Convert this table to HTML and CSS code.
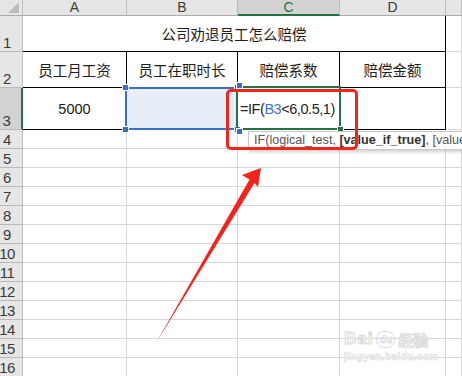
FILE: index.html
```html
<!DOCTYPE html>
<html lang="zh">
<head>
<meta charset="utf-8">
<title>公司劝退员工怎么赔偿</title>
<link rel="stylesheet" href="styles.css">
</head>
<body>
<div class="sheet">
  <div class="hd corner"><span class="tri"></span></div>
  <div class="hd col">A</div>
  <div class="hd col">B</div>
  <div class="hd col on">C</div>
  <div class="hd col">D</div>
  <div class="hd col"></div>

  <div class="hd row">1</div>
  <div class="c title bb br">公司劝退员工怎么赔偿</div>
  <div class="c"></div>

  <div class="hd row">2</div>
  <div class="c ctr bb br">员工月工资</div>
  <div class="c ctr bb br">员工在职时长</div>
  <div class="c ctr bb br">赔偿系数</div>
  <div class="c ctr bb br">赔偿金额</div>
  <div class="c"></div>

  <div class="hd row on">3</div>
  <div class="c ctr num bb br">5000</div>
  <div class="c ref bb br"></div>
  <div class="c formula bb br">=IF(<span class="refname">B3</span>&lt;6,0.5,1)</div>
  <div class="c bb br"></div>
  <div class="c"></div>

  <div class="hd row">4</div><div class="c"></div><div class="c"></div><div class="c"></div><div class="c"></div><div class="c"></div>
  <div class="hd row">5</div><div class="c"></div><div class="c"></div><div class="c"></div><div class="c"></div><div class="c"></div>
  <div class="hd row">6</div><div class="c"></div><div class="c"></div><div class="c"></div><div class="c"></div><div class="c"></div>
  <div class="hd row">7</div><div class="c"></div><div class="c"></div><div class="c"></div><div class="c"></div><div class="c"></div>
  <div class="hd row">8</div><div class="c"></div><div class="c"></div><div class="c"></div><div class="c"></div><div class="c"></div>
  <div class="hd row">9</div><div class="c"></div><div class="c"></div><div class="c"></div><div class="c"></div><div class="c"></div>
  <div class="hd row">10</div><div class="c"></div><div class="c"></div><div class="c"></div><div class="c"></div><div class="c"></div>
  <div class="hd row">11</div><div class="c"></div><div class="c"></div><div class="c"></div><div class="c"></div><div class="c"></div>
  <div class="hd row">12</div><div class="c"></div><div class="c"></div><div class="c"></div><div class="c"></div><div class="c"></div>
  <div class="hd row">13</div><div class="c"></div><div class="c"></div><div class="c"></div><div class="c"></div><div class="c"></div>
  <div class="hd row">14</div><div class="c"></div><div class="c"></div><div class="c"></div><div class="c"></div><div class="c"></div>
  <div class="hd row">15</div><div class="c"></div><div class="c"></div><div class="c"></div><div class="c"></div><div class="c"></div>
  <div class="hd row">16</div><div class="c"></div><div class="c"></div><div class="c"></div><div class="c"></div><div class="c"></div>

  <!-- overlays -->
  <div class="refbox">
    <span class="h tl"></span><span class="h tr"></span><span class="h bl"></span><span class="h br2"></span>
  </div>
  <div class="active"><span class="fill"></span></div>
  <div class="refhandles">
    <span class="h tr"></span><span class="h br2"></span>
  </div>
  <div class="tip">IF(logical_test, <b>[value_if_true]</b>, [value_if_false])</div>
  <div class="callout"></div>
  <svg class="arrow" width="462" height="376" viewBox="0 0 462 376">
    <polygon points="261,168 242,175 249.5,179.5 156,343 254.5,183 258,187" fill="#f5231b"/>
  </svg>
  <div class="wm">
    <div class="wm1"><span class="bai">Bai</span><span class="du">du</span><span class="jy">经验</span></div>
    <div class="wm2">jingyan.baidu.com</div>
  </div>
</div>
</body>
</html>
```
FILE: styles.css
```css
html, body {
  margin: 0;
  padding: 0;
  background: #fff;
  overflow: hidden;
}
.sheet {
  position: relative;
  width: 462px;
  height: 376px;
  overflow: hidden;
  display: grid;
  grid-template-columns: 23px 104px 111px 102px 106px 1fr;
  grid-template-rows: 16px 36px 36px 42px repeat(13, 19px);
  font-family: "Liberation Sans", "Noto Sans CJK SC", sans-serif;
  color: #222;
}
.c {
  box-sizing: border-box;
  border-right: 1px solid #d6d6d6;
  border-bottom: 1px solid #d6d6d6;
  font-size: 14.5px;
}
.c.bb { border-bottom-color: #000; }
.c.br { border-right-color: #000; }
.title {
  grid-column: 2 / 6;
  display: flex;
  align-items: center;
  justify-content: center;
  font-family: "Noto Sans CJK SC", sans-serif;
  font-size: 14.5px;
  color: #1e1e1e;
}
.ctr {
  display: flex;
  align-items: center;
  justify-content: center;
  font-family: "Noto Sans CJK SC", sans-serif;
  color: #1e1e1e;
}
.num {
  font-family: "Liberation Sans", sans-serif;
  font-size: 14.5px;
  color: #1a1a1a;
}
.ref { background: #e8eef8; }
.formula {
  display: flex;
  align-items: center;
  padding-left: 2px;
  font-size: 14.5px;
  letter-spacing: -0.45px;
  color: #262626;
}
.refname { color: #3f6fcb; }

.hd {
  box-sizing: border-box;
  background: #e6e6e6;
  border-right: 1px solid #bcbcbc;
  border-bottom: 1px solid #ababab;
  color: #3a3a3a;
  font-family: "Liberation Sans", sans-serif;
}
.hd.col {
  font-size: 14px;
  line-height: 15px;
  text-align: center;
}
.hd.col.on {
  background: #d3d3d3;
  color: #217346;
  border-bottom: 2px solid #217346;
}
.hd.row {
  font-size: 15px;
  display: flex;
  align-items: flex-end;
  justify-content: center;
  padding-right: 8px;
  line-height: 17px;
  letter-spacing: -0.5px;
  border-bottom-color: #b9b9b9;
}
.hd.row.on {
  background: #d3d3d3;
  border-right: 2px solid #217346;
}
.corner {
  position: relative;
}
.tri {
  position: absolute;
  right: 3px;
  bottom: 2px;
  width: 0;
  height: 0;
  border-left: 11px solid transparent;
  border-bottom: 11px solid #bdbdbd;
}

/* overlays */
.refbox {
  position: absolute;
  left: 125px;
  top: 87px;
  width: 113px;
  height: 43px;
  box-sizing: border-box;
  border: 2px solid #3a6fc8;
}
.h {
  position: absolute;
  width: 5px;
  height: 5px;
  background: #3a6fc8;
  border: 1px solid #fff;
}
.refbox .tl { left: -5px; top: -5px; }
.refbox .tr { right: -5px; top: -5px; }
.refbox .bl { left: -5px; bottom: -5px; }
.refbox .br2 { right: -5px; bottom: -5px; }
.active {
  position: absolute;
  left: 236px;
  top: 86px;
  width: 105px;
  height: 44px;
  box-sizing: border-box;
  border: 2px solid #217346;
}
.active .fill {
  position: absolute;
  right: -5px;
  bottom: -5px;
  width: 5px;
  height: 5px;
  background: #217346;
  border: 1px solid #fff;
}
.refhandles {
  position: absolute;
  left: 125px;
  top: 87px;
  width: 113px;
  height: 43px;
}
.refhandles .tr { right: -5px; top: -5px; }
.refhandles .br2 { right: -5px; bottom: -5px; }
.tip {
  position: absolute;
  left: 248px;
  top: 131px;
  height: 19px;
  padding: 0 5px;
  box-sizing: border-box;
  white-space: nowrap;
  background: #fff;
  border: 1px solid #c8c8c8;
  box-shadow: 1px 2px 3px rgba(0,0,0,0.18);
  font-family: "Liberation Sans", sans-serif;
  font-size: 12.6px;
  line-height: 17px;
  color: #555;
}
.tip b { color: #333; }
.callout {
  position: absolute;
  left: 226px;
  top: 89px;
  width: 132px;
  height: 61px;
  box-sizing: border-box;
  border: 3px solid #f5231b;
  border-radius: 5px;
}
.arrow {
  position: absolute;
  left: 0;
  top: 0;
  pointer-events: none;
}
.wm {
  position: absolute;
  left: 344px;
  top: 329px;
  color: #fff;
  font-family: "Liberation Sans", sans-serif;
  -webkit-text-stroke: 1px #d9d9d9;
}
.wm1 {
  display: flex;
  align-items: center;
  gap: 3px;
  height: 20px;
}
.bai {
  font-size: 17px;
  font-weight: bold;
  letter-spacing: 1px;
}
.du {
  display: inline-flex;
  align-items: center;
  justify-content: center;
  width: 17px;
  height: 15px;
  border: 1px solid #dadada;
  border-radius: 8px;
  font-size: 10px;
  font-weight: bold;
  -webkit-text-stroke: 0.6px #d4d4d4;
}
.jy {
  font-family: "Noto Sans CJK SC", sans-serif;
  font-size: 15px;
  font-weight: bold;
}
.wm2 {
  font-size: 10px;
  font-weight: bold;
  letter-spacing: 0.4px;
  -webkit-text-stroke: 0.6px #dcdcdc;
  margin-top: 2px;
}
```
